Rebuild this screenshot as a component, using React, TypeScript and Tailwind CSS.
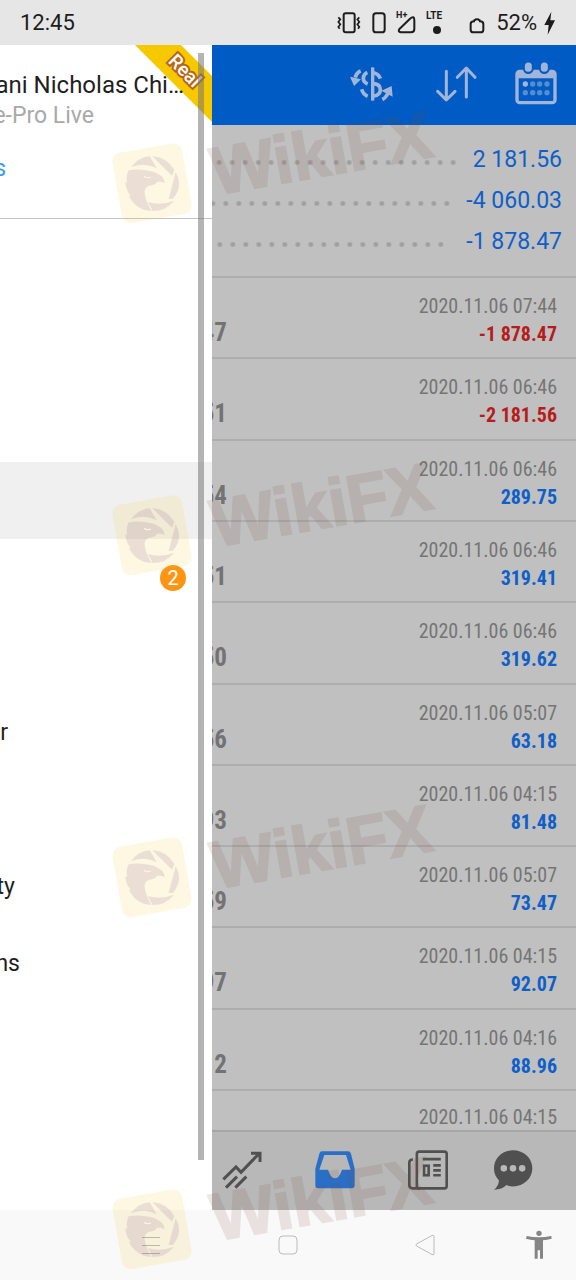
import React from "react";

const summary = [
  { value: "2 181.56", gap: "mr-[13px]" },
  { value: "-4 060.03", gap: "mr-[13px]" },
  { value: "-1 878.47", gap: "mr-[19px]" },
];

const deals = [
  { id: "47", time: "2020.11.06 07:44", amount: "-1 878.47" },
  { id: "51", time: "2020.11.06 06:46", amount: "-2 181.56" },
  { id: "54", time: "2020.11.06 06:46", amount: "289.75" },
  { id: "51", time: "2020.11.06 06:46", amount: "319.41" },
  { id: "50", time: "2020.11.06 06:46", amount: "319.62" },
  { id: "56", time: "2020.11.06 05:07", amount: "63.18" },
  { id: "93", time: "2020.11.06 04:15", amount: "81.48" },
  { id: "59", time: "2020.11.06 05:07", amount: "73.47" },
  { id: "97", time: "2020.11.06 04:15", amount: "92.07" },
  { id: "2", time: "2020.11.06 04:16", amount: "88.96" },
];

const menu = [
  { label: "", width: "w-0" },
  { label: "", width: "w-0" },
  { label: "", width: "w-0" },
  { label: "", width: "w-0", active: true },
  { label: "", width: "w-0", badge: "2" },
  { label: "", width: "w-0" },
  { label: "r", width: "w-2" },
  { label: "", width: "w-0" },
  { label: "ty", width: "w-[15px]" },
  { label: "ns", width: "w-5" },
];

const condensed = "font-['Roboto_Condensed','Liberation_Sans_Narrow',Roboto,sans-serif]";

function StatusBar() {
  return (
    <header className="flex h-[45px] shrink-0 items-center bg-[#e6e6e6] pr-5 pl-5 text-[22px] leading-7 text-[#1c1c1c]">
      <time className="flex-1">12:45</time>
      <svg className="h-6 w-6" viewBox="46 32 72 72" fill="none" stroke="#1c1c1c" strokeWidth="6">
        <rect x="66" y="39" width="33" height="57" rx="6" />
        <path d="M50 51l6 6-6 8 6 7-6 8 4 5M113 51l-6 6 6 8-6 7 6 8-4 5" strokeWidth="5" />
      </svg>
      <svg className="ml-[11px] h-6 w-[14px]" viewBox="151 32 42 72" fill="none" stroke="#1c1c1c" strokeWidth="6">
        <rect x="155" y="39" width="34" height="57" rx="8" />
      </svg>
      <div className="relative ml-[10px] h-6 w-[20px]">
        <svg className="h-6 w-5" viewBox="226 32 60 72" fill="none" stroke="#1c1c1c" strokeWidth="6">
          <path d="M237 85l31-30q13-11 13 5v26q0 10-10 10h-30q-11-2-4-11z" />
        </svg>
        <span className="absolute -top-px left-0 text-[9px] leading-[10px] font-bold">H+</span>
      </div>
      <div className="ml-[10px] flex h-6 flex-col items-center">
        <span className="text-[10px] leading-[10px] font-bold">LTE</span>
        <i className="mt-[5px] ml-[5px] size-[8px] rounded-full bg-[#1c1c1c]" />
      </div>
      <svg className="ml-[27px] h-6 w-4" viewBox="448 32 48 72" fill="none" stroke="#1c1c1c" strokeWidth="6">
        <path d="M463 63q0-4 3-4 1-2 6-2t6 2q3 0 3 4 10 0 10 8v17q0 8-8 8h-22q-8 0-8-8v-17q0-8 10-8z" />
      </svg>
      <span className="ml-[11px]">52%</span>
      <svg className="ml-[7px] h-6 w-3" viewBox="672 32 36 72" fill="#1c1c1c">
        <path d="M694 34l-21 40h13l-3 29 22-43h-14z" />
      </svg>
    </header>
  );
}

function Ribbon() {
  return (
    <div className="absolute top-0 right-0 h-[77px] w-[77px]">
      <svg className="h-full w-full" viewBox="0 0 77 77" fill="#f5c800">
        <path d="M0 0h46l31 31v46z" />
      </svg>
      <span className="absolute top-[14px] left-[31px] rotate-45 text-[19px] leading-6 font-medium text-white [-webkit-text-stroke:4px_#b8651a] [paint-order:stroke_fill]">
        Real
      </span>
    </div>
  );
}

function Drawer() {
  return (
    <aside className="relative w-[212px] shrink-0 overflow-hidden bg-white">
      <Ribbon />
      <div className="relative h-[174px] border-b border-[#c4c4c4] pt-6">
        <p className="flex w-[184px] justify-end text-[24px] leading-8 whitespace-nowrap text-[#1f1f1f]">ani Nicholas Chi…</p>
        <p className="flex w-[94px] justify-end text-[23px] leading-[30px] whitespace-nowrap text-[#a9a9a9]">e-Pro Live</p>
        <a href="#accounts" className="mt-6 flex w-[6px] justify-end text-[23px] leading-7 text-[#3d9be9]">s</a>
      </div>
      <nav className="pt-3">
        {menu.map((item, i) => (
          <a
            key={i}
            href="#menu"
            className={`flex h-[77px] items-center justify-between pr-[26px] text-[23px] leading-7 text-[#1f1f1f] ${item.active ? "bg-[#f0f0f0]" : ""}`}
          >
            <span className={`flex justify-end pt-[2px] ${item.width}`}>{item.label}</span>
            {item.badge && (
              <b className="flex size-[26px] items-center justify-center rounded-full bg-[#ff9412] text-[20px] leading-6 font-normal text-white">
                {item.badge}
              </b>
            )}
          </a>
        ))}
      </nav>
      <div className="absolute top-2 right-2 bottom-[50px] w-[6px] bg-[#777777]/55" />
    </aside>
  );
}

function Toolbar() {
  return (
    <div className="flex h-20 shrink-0 items-center justify-end gap-8 bg-[#005bc4] pr-4 pb-[2px] text-[#a3b5d6]">
      <button aria-label="Symbols" className="flex h-12 w-[58px] items-center justify-center">
        <svg className="h-[38px] w-[45px]" viewBox="86 195 135 114" fill="none" stroke="currentColor" strokeWidth="10">
          <path d="M157 202v100" />
          <path d="M180 236q-5-15-23-18M141 217q-12 6-12 18t13 17M124 268q4 15 18 21M160 251q20 2 20 18t-20 19" strokeWidth="11" />
          <path d="M121 213q-13 5-16 20" strokeWidth="11" />
          <path d="M89 230l33 8-21 20zM183 272l31-14 3 32z" fill="currentColor" stroke="none" />
          <path d="M205 274q-5 17-19 25" strokeWidth="11" />
        </svg>
      </button>
      <button aria-label="Sort" className="flex size-12 items-center justify-center">
        <svg className="h-[38px] w-[42px]" viewBox="346 196 126 114" fill="none" stroke="currentColor" strokeWidth="9" strokeLinecap="round" strokeLinejoin="round">
          <path d="M380 215v85M354 275l26 26 26-26M440 292v-86M413 233l27-28 26 28" />
        </svg>
      </button>
      <button aria-label="Period" className="flex size-12 items-center justify-center">
        <svg className="h-[44px] w-[42px]" viewBox="584 180 126 132" fill="none" stroke="currentColor">
          <rect x="590" y="208" width="114" height="94" rx="8" strokeWidth="10" />
          <path d="M590 213h114v16h-114z" fill="currentColor" stroke="none" />
          <path d="M624 192v8M672 192v8" stroke="#005bc4" strokeWidth="32" strokeLinecap="round" />
          <path d="M624 192v7M672 192v7" strokeWidth="21" strokeLinecap="round" />
          <g fill="currentColor" stroke="none">
            <circle cx="615" cy="246" r="8" />
            <g opacity=".55">
              <circle cx="637" cy="246" r="8" /><circle cx="658" cy="246" r="8" /><circle cx="680" cy="246" r="8" />
              <circle cx="615" cy="272" r="8" /><circle cx="637" cy="272" r="8" /><circle cx="658" cy="272" r="8" /><circle cx="680" cy="272" r="8" />
            </g>
          </g>
        </svg>
      </button>
    </div>
  );
}

function History() {
  return (
    <div className="flex min-h-0 flex-1 flex-col overflow-hidden">
      <div className="h-[153px] shrink-0 border-b-2 border-[#adadad] pt-[14px] pr-[14px]">
        {summary.map((row) => (
          <div key={row.value} className="flex h-[41px] items-center text-[23px] leading-7 text-[#0f5fc8]">
            <i className={`mt-[6px] h-[5px] flex-1 bg-[radial-gradient(circle,#9f9f9f_1px,#a4a4a4_2px,transparent_3px)] bg-[length:13px_5px] bg-right bg-repeat-x ${row.gap}`} />
            <span>{row.value}</span>
          </div>
        ))}
      </div>
      <ul className={`grid min-h-[813px] shrink-0 auto-rows-fr ${condensed}`}>
        {deals.map((deal, i) => (
          <li key={i} className="flex justify-between border-b-2 border-[#adadad] pr-[19px]">
            <span className="mt-[39px] flex w-[15px] justify-end overflow-hidden text-[25px] leading-8 font-bold text-[#737373]">{deal.id}</span>
            <div className="pt-[14px] text-right">
              <p className="text-[20px] leading-7 text-[#757575]">{deal.time}</p>
              <p className={`text-[20px] leading-7 font-bold ${deal.amount.startsWith("-") ? "text-[#b71c1c]" : "text-[#0f5fc8]"}`}>{deal.amount}</p>
            </div>
          </li>
        ))}
      </ul>
      <p className={`pt-[14px] pr-[19px] text-right text-[20px] leading-[25px] text-[#757575] ${condensed}`}>2020.11.06 04:15</p>
    </div>
  );
}

function Tabs() {
  return (
    <nav className="flex h-20 shrink-0 items-center gap-[45px] border-t-2 border-[#a6a6a6] bg-[#b8b8b8] pb-[3px] pl-[6px] text-[#505050]">
      <button aria-label="Trade" className="flex size-12 items-center justify-center">
        <svg className="size-10" viewBox="66 146 120 120" fill="none" stroke="currentColor" strokeWidth="9">
          <path d="M70 234l38-37 15 16 54-56M153 156h27v26M78 259l33-33M106 259l33-33" />
        </svg>
      </button>
      <button aria-label="History" className="flex size-12 items-center justify-center text-[#2a6fc7]">
        <svg className="size-10" viewBox="346 146 120 120" fill="currentColor">
          <path fillRule="evenodd" d="M367 150h78q7 0 9 7l11 45v50q0 9-9 9h-100q-9 0-9-9v-50l12-45q2-7 8-7zm7 11-15 44h26l4 10q6 16 17 16t17-16l4-10h26l-14-44z" />
        </svg>
      </button>
      <button aria-label="News" className="flex size-12 items-center justify-center">
        <svg className="h-10 w-[42px]" viewBox="623 146 126 122" fill="none" stroke="currentColor" strokeWidth="8">
          <rect x="652" y="151" width="91" height="112" rx="7" />
          <path d="M640 175q-11 0-11 10v68q0 10 10 10h24M670 174h55M702 193h23M702 208h23M702 223h23" />
          <rect x="674" y="194" width="14" height="29" />
        </svg>
      </button>
      <button aria-label="Messages" className="-ml-1 flex h-12 w-10 items-center justify-center">
        <svg className="size-10" viewBox="881 146 120 122" fill="currentColor">
          <path fillRule="evenodd" d="M941 147c33 0 59 24 59 55s-26 55-59 55q-12 0-20-4-13 14-38 14 15-12 15-29-15-14-15-36c0-31 25-55 58-55zM913 192a10 10 0 1 0 0 20 10 10 0 0 0 0-20zm28 0a10 10 0 1 0 0 20 10 10 0 0 0 0-20zm28 0a10 10 0 1 0 0 20 10 10 0 0 0 0-20z" />
        </svg>
      </button>
    </nav>
  );
}

function SystemNav() {
  return (
    <footer className="grid h-[70px] shrink-0 grid-cols-[82fr_137fr_137fr_137fr_83fr] items-center justify-items-center bg-[#f9f9f9]">
      <i />
      <button aria-label="Recent apps">
        <svg className="size-5" viewBox="0 0 20 20" stroke="#b5b5b5" strokeWidth="1"><path d="M1 2.5h18M1 10.5h18M1 18.5h18" /></svg>
      </button>
      <button aria-label="Home">
        <svg className="size-5" viewBox="0 0 20 20" fill="none" stroke="#bcbcbc"><rect x="1" y="1" width="18" height="18" rx="4" /></svg>
      </button>
      <button aria-label="Back">
        <svg className="h-[22px] w-5" viewBox="0 0 20 22" fill="none" stroke="#bcbcbc"><path d="M17 1.500q2-1 2 1v17q0 2-2 1L1.500 12q-1-1 0-2z" /></svg>
      </button>
      <button aria-label="Accessibility" className="pl-2">
        <svg className="h-[30px] w-[26px]" viewBox="979 391 78 88" fill="#858585">
          <circle cx="1018" cy="400" r="8" />
          <path d="M981 408q37 8 74 0l1 8q-14 4-26 5v55h-9v-25h-7v25h-9v-55q-12-1-26-5z" />
        </svg>
      </button>
    </footer>
  );
}

function Watermark({ top }: { top: string }) {
  return (
    <div className={`pointer-events-none absolute left-[112px] ${top}`}>
      <svg className="size-20" viewBox="0 0 240 240">
        <rect x="14" y="14" width="212" height="214" rx="26" transform="rotate(-10 120 121)" fill="#f5c330" opacity=".14" />
        <g fill="#75508c" opacity=".14">
          <path d="M57 73q22-30 56-33l21 36q-40-20-77-3z" />
          <path d="M121 40q43 2 66 41l-7 17z" />
          <path d="M191 88q24 41-8 79l-13 1z" />
          <path d="M108 178q42 10 78-5-24 31-64 31z" />
          <path d="M50 82q30-6 68 3 13 3 23 10 15 5 17 26-10-7-22-5-7 10-24 12-16 5-14 22 2 22 20 54-48-4-67-46l6 1q-16-18-17-42l6 3q-5-20 4-38z" />
        </g>
        <path d="M96 100q9 7 21 2" fill="none" stroke="#fdf5e2" strokeWidth="4" />
      </svg>
      <span className="absolute top-[-32px] left-[98px] origin-center rotate-[-10deg] font-['Liberation_Sans',Arial,sans-serif] text-[67px] leading-[84px] font-bold text-[#7a4a42] opacity-13 [-webkit-text-stroke:2px_#7a4a42] [stroke-linejoin:round]">
        WikiFX
      </span>
    </div>
  );
}

export default function App() {
  return (
    <div className="relative flex min-h-screen flex-col overflow-hidden font-[Roboto,sans-serif]">
      <StatusBar />
      <div className="flex flex-1">
        <Drawer />
        <main className="flex min-w-0 flex-1 flex-col overflow-hidden bg-[#c0c0c0]">
          <Toolbar />
          <History />
          <Tabs />
        </main>
      </div>
      <SystemNav />
      <Watermark top="top-[143px]" />
      <Watermark top="top-[495px]" />
      <Watermark top="top-[837px]" />
      <Watermark top="top-[1189px]" />
    </div>
  );
}
